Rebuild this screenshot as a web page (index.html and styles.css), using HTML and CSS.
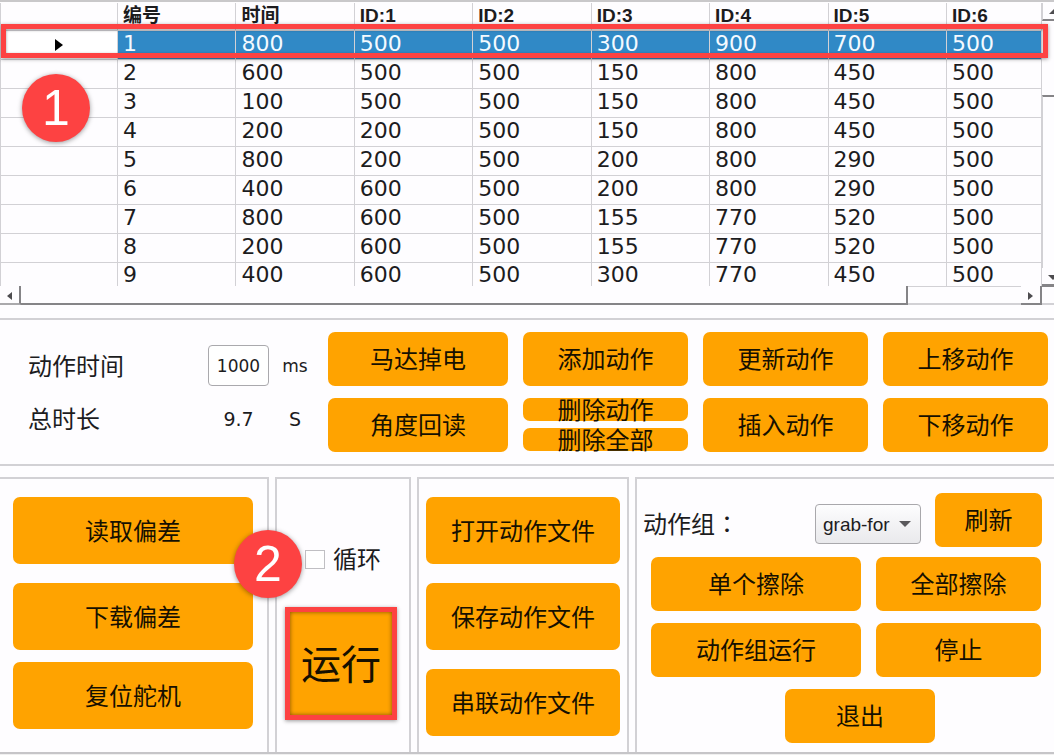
FILE: index.html
```html
<!DOCTYPE html>
<html lang="zh-CN">
<head>
<meta charset="utf-8">
<meta name="viewport" content="width=device-width, initial-scale=1">
<title>动作编辑</title>
<link rel="stylesheet" href="styles.css">
</head>
<body>
<main class="app">
  <section class="sheet">
    <div class="sheet-view">
      <table class="actions">
        <thead>
          <tr><th class="col-mark"></th><th>编号</th><th>时间</th><th>ID:1</th><th>ID:2</th><th>ID:3</th><th>ID:4</th><th>ID:5</th><th class="col-last">ID:6</th></tr>
        </thead>
        <tbody>
          <tr class="selected"><td class="mark"><svg class="pointer" viewBox="0 0 8 12" aria-hidden="true"><path d="M0 0 L8 6 L0 12 Z"/></svg></td><td>1</td><td>800</td><td>500</td><td>500</td><td>300</td><td>900</td><td>700</td><td>500</td></tr>
          <tr><td></td><td>2</td><td>600</td><td>500</td><td>500</td><td>150</td><td>800</td><td>450</td><td>500</td></tr>
          <tr><td></td><td>3</td><td>100</td><td>500</td><td>500</td><td>150</td><td>800</td><td>450</td><td>500</td></tr>
          <tr><td></td><td>4</td><td>200</td><td>200</td><td>500</td><td>150</td><td>800</td><td>450</td><td>500</td></tr>
          <tr><td></td><td>5</td><td>800</td><td>200</td><td>500</td><td>200</td><td>800</td><td>290</td><td>500</td></tr>
          <tr><td></td><td>6</td><td>400</td><td>600</td><td>500</td><td>200</td><td>800</td><td>290</td><td>500</td></tr>
          <tr><td></td><td>7</td><td>800</td><td>600</td><td>500</td><td>155</td><td>770</td><td>520</td><td>500</td></tr>
          <tr><td></td><td>8</td><td>200</td><td>600</td><td>500</td><td>155</td><td>770</td><td>520</td><td>500</td></tr>
          <tr><td></td><td>9</td><td>400</td><td>600</td><td>500</td><td>300</td><td>770</td><td>450</td><td>500</td></tr>
        </tbody>
      </table>
    </div>
    <div class="vbar">
      <span class="vbar-up"><svg viewBox="0 0 10 5" aria-hidden="true"><path d="M0 5 L5 0 L10 5 Z"/></svg></span>
      <span class="vbar-thumb"></span>
      <span class="vbar-track"></span>
      <span class="vbar-down"><svg viewBox="0 0 10 5" aria-hidden="true"><path d="M0 0 L10 0 L5 5 Z"/></svg></span>
    </div>
    <div class="hbar">
      <span class="hbar-left"><svg viewBox="0 0 5 8" aria-hidden="true"><path d="M5 0 L0 4 L5 8 Z"/></svg></span>
      <span class="hbar-thumb"></span>
      <span class="hbar-track"></span>
      <span class="hbar-right"><svg viewBox="0 0 5 8" aria-hidden="true"><path d="M0 0 L5 4 L0 8 Z"/></svg></span>
    </div>
    <div class="corner"></div>
    <div class="row-frame"></div>
    <span class="badge badge-one">1</span>
  </section>

  <section class="controls">
    <div class="times">
      <label for="action-time">动作时间</label>
      <input id="action-time" class="time-input" type="text" value="1000">
      <span class="unit">ms</span>
      <span>总时长</span>
      <output class="total">9.7</output>
      <span class="unit unit-large">S</span>
    </div>
    <button class="btn">马达掉电</button>
    <button class="btn">添加动作</button>
    <button class="btn">更新动作</button>
    <button class="btn">上移动作</button>
    <button class="btn">角度回读</button>
    <div class="split">
      <button class="btn">删除动作</button>
      <button class="btn">删除全部</button>
    </div>
    <button class="btn">插入动作</button>
    <button class="btn">下移动作</button>
  </section>

  <section class="panels">
    <div class="panel offsets">
      <button class="btn">读取偏差</button>
      <button class="btn offsets-download">下载偏差</button>
      <button class="btn">复位舵机</button>
    </div>
    <div class="panel runner">
      <label class="loop"><input class="loop-box" type="checkbox">循环</label>
      <button class="btn run">运行</button>
      <span class="badge badge-two">2</span>
    </div>
    <div class="panel files">
      <button class="btn">打开动作文件</button>
      <button class="btn">保存动作文件</button>
      <button class="btn">串联动作文件</button>
    </div>
    <div class="panel groups">
      <div class="group-pick">
        <label for="group">动作组<span class="colon" lang="zh-TW">：</span></label>
        <div class="combo">
          <select id="group" class="combo-select"><option>grab-for</option></select>
          <svg class="combo-arrow" viewBox="0 0 12 6" aria-hidden="true"><path d="M0 0 L12 0 L6 6 Z"/></svg>
        </div>
        <button class="btn refresh">刷新</button>
      </div>
      <div class="group-actions">
        <button class="btn">单个擦除</button>
        <button class="btn">全部擦除</button>
        <button class="btn">动作组运行</button>
        <button class="btn">停止</button>
      </div>
      <button class="btn exit">退出</button>
    </div>
  </section>
</main>
</body>
</html>
```

FILE: styles.css
```css
* { box-sizing: border-box; }

:root {
  --orange: #ffa300;
  --red: #fd4242;
  --line: #d2d1d5;
  --dark: #858487;
  --page: #fefdff;
}

body {
  margin: 0;
  background: var(--page);
  color: #1c1c1e;
  font-family: "Noto Sans", "Noto Sans CJK SC", sans-serif;
  font-size: 24px;
  overflow-x: hidden;
}

button, input, select { font: inherit; color: inherit; }

.app { display: flex; flex-direction: column; border-bottom: 1px solid #f0f0f0; }

.sheet {
  position: relative;
  display: grid;
  grid-template-columns: minmax(0, 1fr) 12px;
  grid-template-rows: auto 19px;
  padding-top: 1px;
  border-top: 2px solid #c9c8ca;
  margin-bottom: 13px;
}

.sheet-view { border-left: 1px solid var(--line); }

.actions {
  width: 100%;
  table-layout: fixed;
  border-collapse: separate;
  border-spacing: 0;
  font-family: "DejaVu Sans", sans-serif;
  font-size: 22px;
}

.actions th, .actions td {
  height: 29px;
  padding: 0 0 2px 5px;
  border-right: 1px solid var(--line);
  border-bottom: 1px solid var(--line);
  line-height: 26px;
  text-align: left;
}

.actions th {
  height: 28px;
  padding-bottom: 1px;
  font-family: "Liberation Sans", "Noto Sans CJK SC", sans-serif;
  font-size: 19px;
}

.actions tr:last-child td { height: 23px; padding-bottom: 0; line-height: 23px; border-bottom: 0; }
.actions thead tr:last-child th { border-bottom: 1px solid var(--line); }

.col-mark { width: 117px; }
.col-last { width: 95px; }

.actions .selected td { background: #3089c6; color: #f4faff; }
.actions .selected .mark { background: #fff; padding: 0; }
.pointer { display: block; width: 8px; height: 12px; margin: 0 0 0 54px; fill: #000; }

.vbar { display: flex; flex-direction: column; overflow: hidden; }
.vbar svg { display: block; flex: none; width: 10px; height: 5px; margin-left: 6px; fill: #4d4c4f; }
.vbar-up { height: 18px; padding-top: 6px; border-bottom: 2px solid var(--dark); border-left: 1px solid var(--line); }
.vbar-thumb { height: 74px; }
.vbar-track { flex: 1; border-top: 2px solid var(--dark); border-left: 1px solid var(--line); }
.vbar-down { height: 18px; padding-top: 7px; border-bottom: 2px solid var(--dark); }

.hbar { display: flex; }
.hbar svg { display: block; width: 5px; height: 8px; fill: #4d4c4f; }
.hbar-left { width: 21px; padding: 6px 0 0 7px; border-right: 2px solid var(--dark); border-bottom: 2px solid #aaa9ac; }
.hbar-thumb { flex: 886; border-right: 2px solid var(--dark); border-bottom: 2px solid var(--dark); }
.hbar-track { flex: 113; border-top: 1px solid var(--line); border-bottom: 2px solid var(--line); }
.hbar-right { width: 21px; padding: 6px 0 0 7px; border-right: 2px solid var(--dark); border-bottom: 2px solid var(--dark); }
.corner { border-top: 1px solid var(--dark); border-bottom: 2px solid var(--line); }

.row-frame {
  position: absolute;
  top: 22px;
  left: 1px;
  right: 6px;
  height: 34px;
  border: 5px solid var(--red);
  box-shadow: 0 1px 4px rgba(0, 0, 0, 0.4), inset 0 1px 3px rgba(0, 0, 0, 0.4);
}

.badge {
  position: absolute;
  width: 68px;
  height: 68px;
  border-radius: 50%;
  background: var(--red);
  box-shadow: 0 1px 5px rgba(0, 0, 0, 0.4);
  color: #fff;
  font: 50px/68px "Liberation Sans", sans-serif;
  text-align: center;
}
.badge-one { left: 22px; top: 72px; }
.badge-two { left: -43px; top: 51px; }

.btn {
  min-width: 0;
  padding: 0;
  border: 0;
  border-radius: 7px;
  background: var(--orange);
  color: #161000;
  line-height: 24px;
  white-space: nowrap;
}

.controls {
  display: grid;
  grid-template-columns: 313px 180fr 165fr 165fr 165fr;
  grid-template-rows: 54px 54px;
  gap: 12px 15px;
  padding: 12px 6px 12px 0;
  border-top: 2px solid var(--line);
  border-bottom: 2px solid var(--line);
  margin-bottom: 11px;
}

.times {
  grid-row: span 2;
  display: grid;
  grid-template-columns: 180px 61px 52px;
  grid-template-rows: 67px 39px;
  align-items: center;
  padding-left: 28px;
  line-height: 32px;
}

.time-input {
  width: 100%;
  height: 41px;
  padding: 0;
  border: 1px solid #aaa9ad;
  border-radius: 4px;
  background: #fff;
  text-align: center;
  font-family: "DejaVu Sans", sans-serif;
  font-size: 17px;
}

.total, .unit { text-align: center; font-family: "DejaVu Sans", sans-serif; font-size: 19px; }
.unit { font-size: 17px; }
.unit-large { font-size: 19px; }

.split { display: grid; grid-template-rows: 23px 23px; gap: 7px; }

.panels {
  display: grid;
  grid-template-columns: 269fr 136fr 212fr 419fr;
  gap: 6px;
  border-bottom: 2px solid #c6c5c8;
}

.panel {
  position: relative;
  display: flex;
  flex-direction: column;
  gap: 19px;
  min-width: 0;
  min-height: 275px;
  padding: 18px 7px 0;
  border: 2px solid var(--line);
  border-bottom: 0;
}

.panel > .btn { height: 67px; }
.offsets { border-left: 0; padding-left: 13px; padding-right: 14px; }
.offsets-download { margin-bottom: -7px; }

.runner { align-items: center; padding: 64px 4px 0 0; gap: 32px; }
.loop { display: flex; align-items: center; gap: 8px; line-height: 32px; margin-left: 4px; }
.loop-box {
  appearance: none;
  width: 20px;
  height: 19px;
  margin: 0;
  border: 1px solid #c0bfc3;
  background: #fff;
}
.panel > .run {
  width: 112px;
  height: 113px;
  border: 5px solid var(--red);
  border-radius: 0;
  box-shadow: 0 1px 4px rgba(0, 0, 0, 0.4), inset 0 0 4px rgba(0, 0, 0, 0.5);
  font-size: 40px;
  line-height: 56px;
}

.groups { border-right: 0; padding: 14px 13px 0 14px; gap: 10px; }
.group-pick { display: flex; align-items: center; height: 54px; margin: 0 -1px 0 -8px; }
.colon { font-family: "Noto Sans CJK TC", sans-serif; }
.combo { position: relative; width: 106px; margin: 8px 14px 0 auto; height: 40px; }
.combo-select {
  display: block;
  appearance: none;
  width: 100%;
  height: 100%;
  padding: 0 24px 0 7px;
  border: 1px solid #a9a8ac;
  border-radius: 4px;
  background: linear-gradient(#fdfdfe, #e9e9ec);
  font-family: "Liberation Sans", sans-serif;
  font-size: 19px;
}
.combo-arrow { position: absolute; top: 17px; right: 10px; width: 12px; height: 6px; fill: #5a595c; pointer-events: none; }
.refresh { width: 107px; height: 54px; }
.group-pick label { line-height: 32px; padding-top: 6px; }

.group-actions {
  display: grid;
  grid-template-columns: 210fr 165fr;
  grid-template-rows: 54px 54px;
  gap: 12px 15px;
}
.panel > .exit { align-self: center; width: 150px; height: 54px; margin: 2px 0 0 28px; }
```
